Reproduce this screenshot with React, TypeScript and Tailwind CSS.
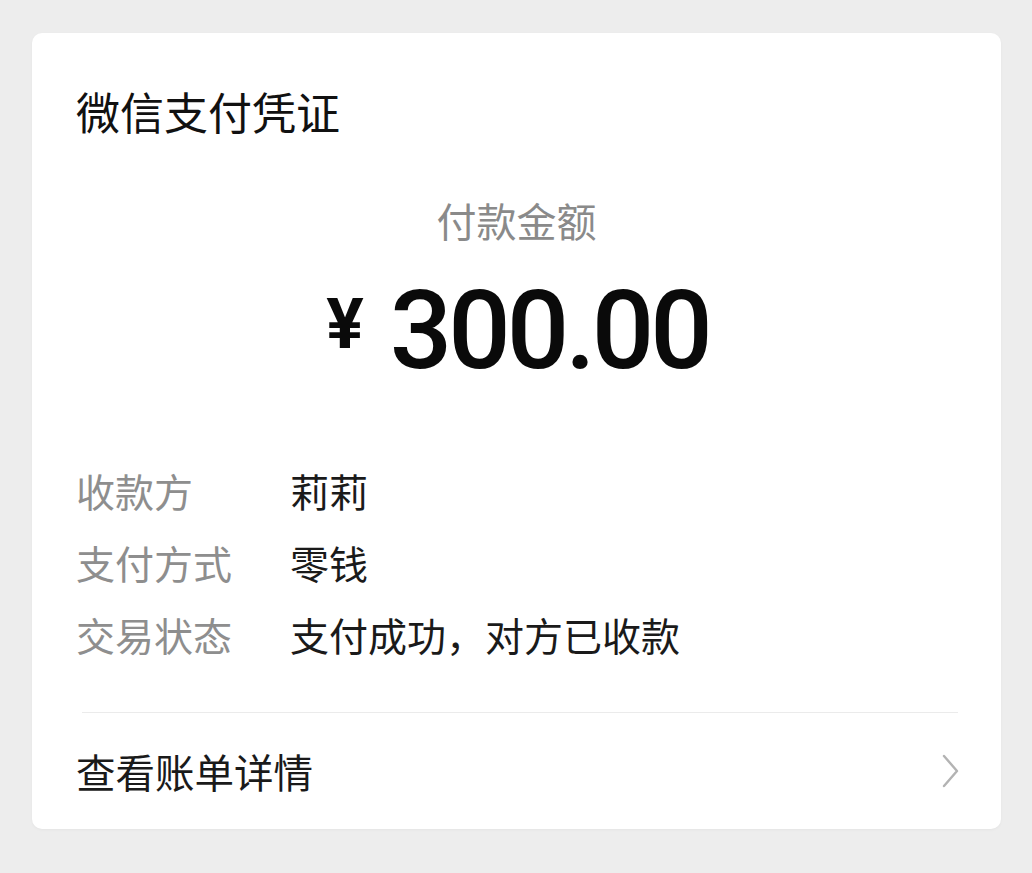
import React from "react";

const rows = [
  { label: "收款方", value: "莉莉" },
  { label: "支付方式", value: "零钱" },
  { label: "交易状态", value: "支付成功，对方已收款" },
];

export default function App() {
  return (
    <div className="min-h-[873px] bg-[#ededed] pt-[33px] pl-[32px] pr-[31px] font-['Noto_Sans_CJK_SC','Noto_Sans',sans-serif]">
      <div className="bg-white rounded-[10px] shadow-[0_1px_3px_rgba(0,0,0,0.04)]">
        {/* Header */}
        <div className="px-[44px] pt-[56px]">
          <h1 className="text-[44px] leading-[44px] text-[#111111] font-normal">微信支付凭证</h1>
        </div>

        {/* Amount */}
        <div className="flex flex-col items-center mt-[67px]">
          <div className="text-[40px] leading-[40px] text-[#8a8a8a]">付款金额</div>
          <div className="flex items-start mt-[36px] ml-[2px] font-['Roboto','Liberation_Sans',sans-serif] text-[#0a0a0a]">
            <span className="text-[70px] leading-none font-bold mt-[13px] mr-[26px]">¥</span>
            <span className="text-[110px] leading-none font-medium tracking-[-4px]">300.00</span>
          </div>
        </div>

        {/* Info rows */}
        <div className="px-[44px] mt-[68px]">
          {rows.map((r) => (
            <div key={r.label} className="flex h-[72px] items-center text-[39px] leading-[72px]">
              <span className="w-[214px] shrink-0 text-[#8e8e8e]">{r.label}</span>
              <span className="text-[#1a1a1a]">{r.value}</span>
            </div>
          ))}
        </div>

        <div className="mt-[42px] ml-[50px] mr-[43px] h-px bg-[#ebebeb]" />

        {/* Footer link */}
        <div className="flex h-[116px] items-center justify-between pl-[44px] pr-[41px]">
          <span className="text-[39.5px] leading-none text-[#1a1a1a]">查看账单详情</span>
          <svg width="18" height="34" viewBox="0 0 18 34" fill="none">
            <path d="M2 2 L15 17 L2 32" stroke="#b3b3b3" strokeWidth="2.4" strokeLinecap="round" strokeLinejoin="round" />
          </svg>
        </div>
      </div>
    </div>
  );
}
